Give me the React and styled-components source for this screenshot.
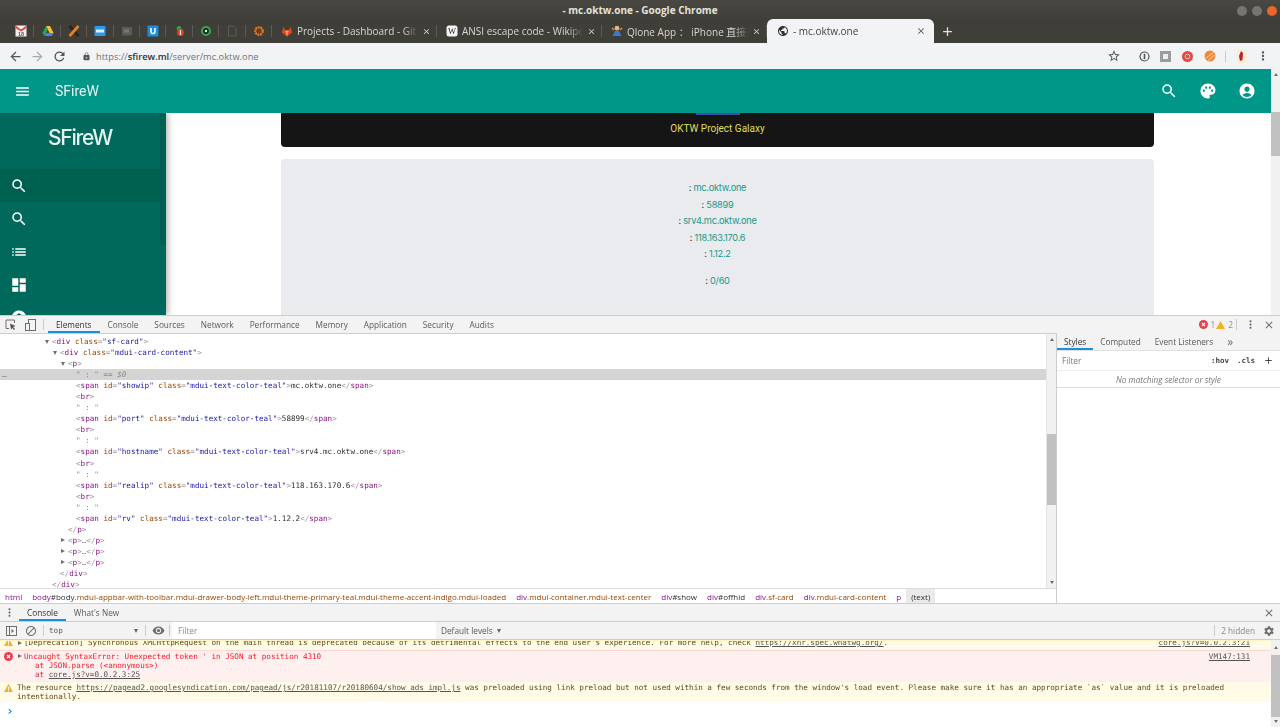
import styled, { createGlobalStyle } from 'styled-components'
import {
  MdAdd, MdArrowBack, MdArrowForward, MdClose, MdRefresh, MdLock, MdStarBorder, MdMoreVert,
  MdMenu, MdSearch, MdPalette, MdAccountCircle, MdList, MdDashboard, MdSettings,
  MdBlock, MdVisibility, MdPublic,
} from 'react-icons/md'

const GlobalStyle = createGlobalStyle`
  html, body {
    margin: 0;
    padding: 0;
    overflow: hidden;
    background: #fff;
  }
`

const UI = `'Open Sans', 'Noto Sans CJK SC', sans-serif`
const MONO = `'DejaVu Sans Mono', monospace`

const Win = styled.div`
  width: 1280px;
  height: 727px;
  display: flex;
  flex-direction: column;
  overflow: hidden;
  font-family: ${UI};
  filter: blur(0.35px);
`

const TitleBar = styled.div`
  height: 19px;
  flex: none;
  position: relative;
  display: flex;
  align-items: center;
  justify-content: center;
  background: linear-gradient(180deg, #4a4842 0%, #403e39 100%);
  color: #e4e2dc;
  font-size: 10px;
  font-weight: 700;
`

const WinButtons = styled.div`
  position: absolute;
  right: 3px;
  top: 6px;
  display: flex;
  gap: 5px;
`

const WinButton = styled.span`
  width: 10px;
  height: 10px;
  border-radius: 50%;
  background: ${(p) => p.$color};
`

const TabStrip = styled.div`
  height: 24px;
  flex: none;
  display: flex;
  align-items: stretch;
  padding-left: 8px;
  background: #403e39;
  color: #d8d7d3;
  font-size: 10px;
`

const PinnedTab = styled.div`
  width: 26.4px;
  flex: none;
  display: flex;
  align-items: center;
  justify-content: center;
  position: relative;
  &::after {
    content: '';
    position: absolute;
    right: 0;
    top: 6px;
    bottom: 6px;
    width: 1px;
    background: #5c5a55;
  }
`

const Tab = styled.div`
  width: ${(p) => p.$w}px;
  flex: none;
  display: flex;
  align-items: center;
  gap: 4px;
  padding: 0 6px 0 9px;
  box-sizing: border-box;
  position: relative;
  ${(p) => p.$active ? `
    background: #f2f3f5;
    color: #45433f;
    border-radius: 6px 6px 0 0;
    padding-left: 10px;
    padding-right: 8px;
  ` : `
    &::after {
      content: '';
      position: absolute;
      right: 0;
      top: 6px;
      bottom: 6px;
      width: 1px;
      background: #5c5a55;
    }
  `}
`

const TabLabel = styled.span`
  flex: 1;
  white-space: nowrap;
  overflow: hidden;
  ${(p) => !p.$active && `
    -webkit-mask-image: linear-gradient(90deg, #000 88%, transparent 100%);
    mask-image: linear-gradient(90deg, #000 88%, transparent 100%);
  `}
`

const NewTab = styled.div`
  width: 28px;
  display: flex;
  align-items: center;
  justify-content: center;
  color: #e4e3df;
  font-size: 15px;
`

const Toolbar = styled.div`
  height: 26px;
  flex: none;
  display: flex;
  align-items: center;
  padding: 0 7px 0 4px;
  background: #f2f3f5;
  color: #5c5e60;
`

const NavIcon = styled.span`
  display: flex;
  width: 22px;
  justify-content: center;
  font-size: 15px;
  color: ${(p) => p.$dim ? '#a9abad' : '#54565a'};
`

const Url = styled.div`
  display: flex;
  align-items: center;
  gap: 5px;
  margin-left: 12px;
  font-size: 9.3px;
  color: #70757a;
  svg { font-size: 9px; color: #54565a; }
  b { color: #303236; font-weight: 600; }
`

const ToolIcons = styled.div`
  margin-left: auto;
  display: flex;
  align-items: center;
`

const ExtSlot = styled.span`
  display: flex;
  justify-content: center;
  align-items: center;
  width: ${(p) => p.$w}px;
`

const Page = styled.div`
  height: 246px;
  flex: none;
  display: flex;
  overflow: hidden;
`

const Viewport = styled.div`
  flex: 1;
  min-width: 0;
  display: flex;
  flex-direction: column;
`

const AppBar = styled.div`
  height: 44px;
  flex: none;
  display: flex;
  align-items: center;
  padding: 0 15px 0 14px;
  background: #009688;
  color: #fff;
  position: relative;
  z-index: 2;
`

const AppBarIcon = styled.span`
  display: flex;
  font-size: ${(p) => p.$size || 17}px;
`

const AppTitle = styled.span`
  margin-left: 24px;
  font-family: Roboto, sans-serif;
  font-size: 14px;
  color: #e6f3f1;
`

const AppActions = styled.div`
  margin-left: auto;
  display: flex;
  align-items: center;
  gap: 21px;
`

const Body = styled.div`
  flex: 1;
  min-height: 0;
  display: flex;
`

const Drawer = styled.div`
  width: 166px;
  flex: none;
  background: #00695c;
  color: #fff;
  position: relative;
  overflow: hidden;
  box-shadow: 2px 0 6px rgba(0, 0, 0, 0.3);
  z-index: 1;
`

const DrawerBar = styled.div`
  position: absolute;
  right: 0;
  top: 0;
  width: 6px;
  height: 132px;
  background: #005f53;
`

const Logo = styled.div`
  height: 56px;
  padding-right: 6px;
  display: flex;
  align-items: flex-start;
  justify-content: center;
  font-family: Inter, sans-serif;
  font-size: 21px;
  font-weight: 500;
  letter-spacing: -1.2px;
  color: #e6f3f1;
  line-height: 50px;
`

const DrawerItem = styled.div`
  height: 33.2px;
  display: flex;
  align-items: center;
  padding-left: 10px;
  font-size: 18px;
  background: ${(p) => p.$active ? '#00604f' : 'transparent'};
`

const Main = styled.div`
  flex: 1;
  min-width: 0;
  background: #fff;
  display: flex;
  flex-direction: column;
  align-items: center;
  padding-right: 2px;
`

const BannerCard = styled.div`
  width: 873px;
  height: 34px;
  flex: none;
  background: #151515;
  border-radius: 0 0 4px 4px;
  display: flex;
  flex-direction: column;
  align-items: center;
  color: #e2de58;
  position: relative;
`

const BannerStrip = styled.div`
  width: 44px;
  height: 2px;
  background: #3f51a5;
`

const BannerText = styled.div`
  margin-top: 7px;
  line-height: 14px;
  font-family: Roboto, sans-serif;
  font-size: 10px;
`

const InfoCard = styled.div`
  width: 873px;
  height: 200px;
  flex: none;
  margin-top: 12px;
  padding-top: 21px;
  box-sizing: border-box;
  background: #e9ebee;
  border-radius: 4px;
  text-align: center;
  font-family: Inter, Roboto, sans-serif;
  font-size: 9.2px;
  letter-spacing: -0.25px;
  color: #333;
`

const InfoGroup = styled.p`
  margin: 0 0 10.5px;
  line-height: 16.5px;
`

const Teal = styled.span`
  color: #16998b;
`

const PageScroll = styled.div`
  width: 9px;
  flex: none;
  background: #f1f1f1;
  display: flex;
  flex-direction: column;
  align-items: center;
`

const ScrollArrow = styled.span`
  width: 0;
  height: 0;
  flex: none;
  border-left: 2.5px solid transparent;
  border-right: 2.5px solid transparent;
  ${(p) => p.$down ? 'border-top: 3px solid #6e6e6e;' : 'border-bottom: 3px solid #6e6e6e;'}
  margin: ${(p) => p.$margin};
`

const ScrollThumb = styled.span`
  width: 9px;
  height: ${(p) => p.$h}px;
  flex: none;
  background: #c1c1c1;
  margin-top: ${(p) => p.$top}px;
`

const Devtools = styled.div`
  flex: 1;
  min-height: 0;
  display: flex;
  flex-direction: column;
  background: #fff;
`

const PanelTabs = styled.div`
  height: ${(p) => p.$h}px;
  flex: none;
  box-sizing: border-box;
  display: flex;
  align-items: stretch;
  background: #f3f3f3;
  border-top: 1px solid #cdcdcd;
  border-bottom: 1px solid #cdcdcd;
  color: #5a5a5a;
  font-size: 8.25px;
`

const ToolBtn = styled.span`
  width: ${(p) => p.$w || 19}px;
  flex: none;
  display: flex;
  align-items: center;
  justify-content: center;
  color: #6e6e6e;
  font-size: ${(p) => p.$size || 12}px;
`

const BarSep = styled.span`
  width: 1px;
  flex: none;
  align-self: center;
  height: 11px;
  background: #ccc;
  margin: 0 ${(p) => p.$gap || 4}px;
`

const PanelTab = styled.span`
  display: flex;
  align-items: center;
  padding: 0 8px;
  color: ${(p) => p.$active ? '#333' : '#5a5a5a'};
  box-shadow: ${(p) => p.$active ? 'inset 0 -2px 0 #1a8fdd' : 'none'};
`

const SideTab = styled(PanelTab)`
  padding: 0 7px;
`

const MoreTabs = styled(SideTab)`
  font-size: 12px;
  color: #6e6e6e;
`

const Counter = styled.span`
  display: flex;
  align-items: center;
  gap: 3px;
  margin-right: 1px;
  font-size: 8.25px;
`

const Split = styled.div`
  height: 269px;
  flex: none;
  display: flex;
`

const ElementsPane = styled.div`
  flex: 1;
  min-width: 0;
  display: flex;
  flex-direction: column;
`

const TreeWrap = styled.div`
  flex: 1;
  min-height: 0;
  display: flex;
`

const Tree = styled.div`
  flex: 1;
  min-width: 0;
  padding-top: 2px;
  font-family: ${MONO};
  font-size: 7.6px;
  overflow: hidden;
`

const Row = styled.div`
  height: 11.05px;
  line-height: 11px;
  white-space: pre;
  position: relative;
  padding-left: ${(p) => p.$x}px;
  background: ${(p) => p.$selected ? '#d4d4d4' : 'transparent'};
`

const Caret = styled.span`
  position: absolute;
  top: 3.5px;
  margin-left: -7px;
  width: 0;
  height: 0;
  ${(p) => p.$open ? `
    border-left: 2.5px solid transparent;
    border-right: 2.5px solid transparent;
    border-top: 4px solid #6e6e6e;
  ` : `
    border-top: 2.5px solid transparent;
    border-bottom: 2.5px solid transparent;
    border-left: 4px solid #6e6e6e;
  `}
`

const RowDots = styled.span`
  position: absolute;
  left: 2px;
  color: #777;
`

const Bracket = styled.span`color: #a894a6;`
const TagName = styled.span`color: #881280;`
const AttrName = styled.span`color: #994500;`
const AttrVal = styled.span`color: #1a1aa6;`
const NodeText = styled.span`color: #303030;`
const Gray = styled.span`color: #8a8a8a;`
const GrayItalic = styled.span`color: #8a8a8a; font-style: italic;`

const VScroll = styled.div`
  width: 10px;
  flex: none;
  background: #f1f1f1;
  border-left: 1px solid #e4e4e4;
  box-sizing: border-box;
  display: flex;
  flex-direction: column;
  align-items: center;
`

const Crumbs = styled.div`
  height: 15px;
  flex: none;
  display: flex;
  align-items: stretch;
  border-top: 1px solid #dcdcdc;
  box-sizing: border-box;
  font-size: 8px;
  white-space: nowrap;
  color: #303030;
`

const Crumb = styled.span`
  display: flex;
  align-items: center;
  padding: 0 5px;
  background: ${(p) => p.$selected ? '#eaeaea' : 'transparent'};
`

const CrumbTag = styled.span`color: #881280;`
const CrumbClass = styled.span`color: #994500;`

const Sidebar = styled.div`
  width: 224px;
  flex: none;
  box-sizing: border-box;
  border-left: 1px solid #cdcdcd;
  display: flex;
  flex-direction: column;
  margin-top: -1px;
`

const SideTabs = styled.div`
  height: 18px;
  flex: none;
  display: flex;
  align-items: stretch;
  background: #f3f3f3;
  border-bottom: 1px solid #e0e0e0;
  font-size: 8.25px;
  color: #5a5a5a;
  box-sizing: border-box;
`

const FilterRow = styled.div`
  height: 19px;
  flex: none;
  display: flex;
  align-items: center;
  padding-left: 5px;
  color: #757575;
  font-size: 8.25px;
`

const FilterActions = styled.div`
  margin-left: auto;
  display: flex;
  align-items: center;
  gap: 8px;
  padding-right: 6px;
  font-family: ${MONO};
  font-size: 7.5px;
  font-weight: 700;
  color: #444;
`

const EmptyNote = styled.div`
  height: 18px;
  flex: none;
  box-sizing: border-box;
  display: flex;
  align-items: center;
  justify-content: center;
  border-top: 1px solid #eee;
  border-bottom: 1px solid #ddd;
  color: #777;
  font-size: 8.2px;
  font-style: italic;
`

const ConsoleBar = styled.div`
  height: 18px;
  flex: none;
  display: flex;
  align-items: center;
  background: #f3f3f3;
  border-bottom: 1px solid #cdcdcd;
  box-sizing: border-box;
  font-size: 8.25px;
  color: #5a5a5a;
`

const LevelFilter = styled.div`
  width: 264px;
  flex: none;
  align-self: stretch;
  display: flex;
  align-items: center;
  padding-left: 6px;
  box-sizing: border-box;
  background: #fff;
  color: #8a8a8a;
`

const TopSelect = styled.span`
  width: 95px;
  display: flex;
  align-items: center;
  justify-content: space-between;
  padding: 0 4px 0 2px;
  box-sizing: border-box;
  font-family: ${MONO};
  font-size: 7.6px;
`

const DownTri = styled.span`
  width: 0;
  height: 0;
  border-left: 2.5px solid transparent;
  border-right: 2.5px solid transparent;
  border-top: 4px solid #666;
`

const Levels = styled.span`
  display: flex;
  align-items: center;
  gap: 4px;
  margin-left: 5px;
`

const Hidden = styled.span`
  margin-left: auto;
  display: flex;
  align-items: center;
  color: #8a8a8a;
`

const HiddenCount = styled.span`
  margin-right: 3px;
`

const ConsoleBody = styled.div`
  flex: 1;
  min-height: 0;
  display: flex;
`

const Messages = styled.div`
  flex: 1;
  min-width: 0;
  overflow: hidden;
  font-family: ${MONO};
  font-size: 7.6px;
  line-height: 9px;
`

const Msg = styled.div`
  display: flex;
  box-sizing: border-box;
  height: ${(p) => p.$h}px;
  overflow: hidden;
  padding: ${(p) => p.$pad};
  background: ${(p) => p.$kind === 'error' ? '#fff0f0' : '#fffbe6'};
  color: ${(p) => p.$kind === 'error' ? '#f0202c' : '#5c4a22'};
  border-top: 1px solid ${(p) => p.$kind === 'error' ? '#ffd6d6' : '#fff5c2'};
  position: relative;
`

const MsgText = styled.div`
  flex: 1;
  min-width: 0;
  white-space: pre;
  margin-top: ${(p) => p.$shift || 0}px;
`

const StackLine = styled.div`
  padding-left: 11px;
`

const MsgIcon = styled.svg`
  position: absolute;
  left: 4px;
  top: ${(p) => p.$top}px;
`

const MsgCaret = styled.span`
  position: absolute;
  left: 18px;
  top: ${(p) => p.$top}px;
  width: 0;
  height: 0;
  border-top: 2.5px solid transparent;
  border-bottom: 2.5px solid transparent;
  border-left: 4px solid #6e6e6e;
`

const MsgLink = styled.span`
  color: #545454;
  text-decoration: underline;
`

const MsgSource = styled(MsgLink)`
  position: absolute;
  right: 21px;
  top: ${(p) => p.$top}px;
`

const Prompt = styled.div`
  padding: 2px 0 0 6px;
  color: #1a8fdd;
  font-size: 13px;
  line-height: 13px;
  font-weight: 700;
`

function Fav({ kind }) {
  const common = { width: 12, height: 12, viewBox: '0 0 12 12' }
  switch (kind) {
    case 'gmail':
      return (
        <svg {...common}>
          <rect x="0.5" y="0.5" width="11" height="11" fill="#f4f0ee" />
          <path d="M.5.5 6 4.500 11.500.5v2.500L6 6.500.5 3z" fill="#d9473c" />
          <text x="6" y="11.300" fontSize="5.500" fontFamily="Liberation Sans, sans-serif" fontWeight="700" textAnchor="middle" fill="#555">18</text>
        </svg>
      )
    case 'drive':
      return (
        <svg {...common}>
          <path d="M4 1h4l3.600 7H7.600z" fill="#f5c02f" />
          <path d="M4 1l2 3.600L2.400 11 .4 8z" fill="#2ba15a" />
          <path d="M2.400 11l2-3h7.200l-2 3z" fill="#4285f4" />
        </svg>
      )
    case 'x':
      return (
        <svg {...common}>
          <path d="M1.500 1 10.500 11" stroke="#2c2622" strokeWidth="2.800" />
          <path d="M10.500 1 1.500 11" stroke="#e8811f" strokeWidth="2.800" />
        </svg>
      )
    case 'blue':
      return (
        <svg {...common}>
          <rect x="0.5" y="1" width="11" height="10" rx="1" fill="#2d9be8" />
          <rect x="2" y="4.5" width="8" height="3" fill="#d8effd" />
        </svg>
      )
    case 'folder':
      return (
        <svg {...common}>
          <rect x="1" y="2" width="10" height="8.500" rx="1" fill="#5e5c58" />
          <rect x="3" y="4.500" width="5" height="3" fill="#78766f" />
        </svg>
      )
    case 'u':
      return (
        <svg {...common}>
          <rect x="0.500" y="0.500" width="11" height="11" rx="1" fill="#1f8ed8" />
          <path d="M4 3v3.600a2 2 0 0 0 4 0V3" stroke="#fff" strokeWidth="1.500" fill="none" />
        </svg>
      )
    case 'bug':
      return (
        <svg {...common}>
          <circle cx="5" cy="3.400" r="2.400" fill="#3e9b4a" />
          <circle cx="6.400" cy="7.400" r="3.600" fill="#d8382d" />
          <rect x="5.800" y="5" width="1.300" height="5" fill="#f5e6c8" />
        </svg>
      )
    case 'ring':
      return (
        <svg {...common}>
          <circle cx="6" cy="6" r="4" stroke="#2fa84f" strokeWidth="2.200" fill="#222" />
          <circle cx="6" cy="6" r="1.200" fill="#e9f5c8" />
        </svg>
      )
    case 'doc':
      return (
        <svg {...common}>
          <path d="M2.500 1h5l2.500 2.500V11h-7.500z" fill="none" stroke="#5f5d58" strokeWidth="1" />
        </svg>
      )
    case 'gear':
      return (
        <svg {...common}>
          <circle cx="6" cy="6" r="3.700" fill="none" stroke="#e8791f" strokeWidth="2.300" strokeDasharray="2 0.6" />
          <circle cx="6" cy="6" r="1.700" fill="#7a3d22" />
        </svg>
      )
    case 'gitlab':
      return (
        <svg {...common}>
          <path d="M6 11.500 .8 7.400 2.600 1.500l1.500 4h3.800l1.500-4 1.800 5.900z" fill="#e24329" />
          <path d="M6 11.500 4.100 5.500h3.800z" fill="#fc9f3a" />
        </svg>
      )
    case 'wiki':
      return (
        <svg {...common}>
          <rect x="0.500" y="0.500" width="11" height="11" rx="2.500" fill="#f4f4f4" />
          <text x="6" y="9" fontSize="8.500" fontFamily="Liberation Serif, serif" textAnchor="middle" fill="#222">W</text>
        </svg>
      )
    case 'qlone':
      return (
        <svg {...common}>
          <circle cx="6" cy="3.200" r="2.400" fill="#e9b487" />
          <path d="M1.500 11 4 6h4l2.500 5z" fill="#3d78c9" />
          <path d="M1 3l2 2M11 3 9 5" stroke="#d9a020" strokeWidth="1.200" />
        </svg>
      )
    default:
      return null
  }
}

const pinned = ['gmail', 'drive', 'x', 'blue', 'folder', 'u', 'bug', 'ring', 'doc', 'gear']

const WarnIcon = ({ top }) => (
  <MsgIcon $top={top} width="9" height="8" viewBox="0 0 9 8">
    <path d="M4.500 0 9 8H0z" fill="#f2b321" />
    <rect x="4" y="2.800" width="1" height="2.800" fill="#fff" />
    <rect x="4" y="6.200" width="1" height="1" fill="#fff" />
  </MsgIcon>
)

const ErrorIcon = ({ top }) => (
  <MsgIcon $top={top} width="9" height="9" viewBox="0 0 9 9">
    <circle cx="4.500" cy="4.500" r="4.500" fill="#e2404c" />
    <path d="M3 3l3 3M6 3 3 6" stroke="#fff" strokeWidth="1.100" />
  </MsgIcon>
)

function SpanRow({ id, text }) {
  return (
    <Row $x={76}>
      <Bracket>&lt;</Bracket><TagName>span</TagName> <AttrName>id</AttrName><Bracket>=</Bracket>
      <AttrVal>"{id}"</AttrVal> <AttrName>class</AttrName><Bracket>=</Bracket>
      <AttrVal>"mdui-text-color-teal"</AttrVal><Bracket>&gt;</Bracket><NodeText>{text}</NodeText>
      <Bracket>&lt;/</Bracket><TagName>span</TagName><Bracket>&gt;</Bracket>
    </Row>
  )
}

function BrRow() {
  return <Row $x={76}><Bracket>&lt;</Bracket><TagName>br</TagName><Bracket>&gt;</Bracket></Row>
}

function ColonRow() {
  return <Row $x={76}><Gray>" : "</Gray></Row>
}

function CollapsedP() {
  return (
    <Row $x={68}>
      <Caret />
      <Bracket>&lt;</Bracket><TagName>p</TagName><Bracket>&gt;</Bracket><Gray>…</Gray>
      <Bracket>&lt;/</Bracket><TagName>p</TagName><Bracket>&gt;</Bracket>
    </Row>
  )
}

const infoLines = ['mc.oktw.one', '58899', 'srv4.mc.oktw.one', '118.163.170.6', '1.12.2']

const spanRows = [
  ['showip', 'mc.oktw.one'],
  ['port', '58899'],
  ['hostname', 'srv4.mc.oktw.one'],
  ['realip', '118.163.170.6'],
  ['rv', '1.12.2'],
]

export default function App() {
  return (
    <>
      <GlobalStyle />
      <Win>
        <TitleBar>
          - mc.oktw.one - Google Chrome
          <WinButtons>
            <WinButton $color="#77756f" />
            <WinButton $color="#77756f" />
            <WinButton $color="#e8672c" />
          </WinButtons>
        </TitleBar>

        <TabStrip>
          {pinned.map((k) => (
            <PinnedTab key={k}><Fav kind={k} /></PinnedTab>
          ))}
          <Tab $w={165}>
            <Fav kind="gitlab" />
            <TabLabel>Projects - Dashboard - GitLab</TabLabel>
            <MdClose size={9} />
          </Tab>
          <Tab $w={165}>
            <Fav kind="wiki" />
            <TabLabel>ANSI escape code - Wikipedia</TabLabel>
            <MdClose size={9} />
          </Tab>
          <Tab $w={165}>
            <Fav kind="qlone" />
            <TabLabel>Qlone App ： iPhone 直接掃描</TabLabel>
            <MdClose size={9} />
          </Tab>
          <Tab $w={167} $active>
            <MdPublic size={12} color="#333" />
            <TabLabel $active>- mc.oktw.one</TabLabel>
            <MdClose size={10} color="#555" />
          </Tab>
          <NewTab><MdAdd /></NewTab>
        </TabStrip>

        <Toolbar>
          <NavIcon><MdArrowBack /></NavIcon>
          <NavIcon $dim><MdArrowForward /></NavIcon>
          <NavIcon><MdRefresh /></NavIcon>
          <Url>
            <MdLock />
            <span>https://<b>sfirew.ml</b>/server/mc.oktw.one</span>
          </Url>
          <ToolIcons>
            <ExtSlot $w={22}><MdStarBorder size={14} color="#55575a" /></ExtSlot>
            <ExtSlot $w={8} />
            <ExtSlot $w={22}>
              <svg width="11" height="11" viewBox="0 0 11 11">
                <circle cx="5.500" cy="5.500" r="4.500" fill="none" stroke="#555" strokeWidth="1.200" />
                <rect x="4.700" y="2.800" width="1.600" height="5.400" fill="#555" />
              </svg>
            </ExtSlot>
            <ExtSlot $w={21}>
              <svg width="11" height="11" viewBox="0 0 11 11">
                <rect width="11" height="11" fill="#9a9c9e" />
                <rect x="3" y="3" width="5" height="5" fill="#eee" />
              </svg>
            </ExtSlot>
            <ExtSlot $w={22}>
              <svg width="11" height="11" viewBox="0 0 11 11">
                <circle cx="5.500" cy="5.500" r="5.500" fill="#e04a44" />
                <circle cx="5.500" cy="5.500" r="2.300" fill="none" stroke="#f4c6c0" strokeWidth="1" />
              </svg>
            </ExtSlot>
            <ExtSlot $w={23}>
              <svg width="12" height="12" viewBox="0 0 12 12">
                <circle cx="6" cy="6" r="5.500" fill="#ee8a34" />
                <path d="M2 8 9.500 2.500M4 10.500 10.500 5" stroke="#f7d2ad" strokeWidth="1" />
              </svg>
            </ExtSlot>
            <BarSep $gap={4} />
            <ExtSlot $w={23}>
              <svg width="13" height="14" viewBox="0 0 13 14">
                <rect x="2" width="10" height="14" fill="#f5efd8" />
                <path d="M6 2 8 4 7.500 11 5 12 4 7z" fill="#b3282d" />
              </svg>
            </ExtSlot>
            <ExtSlot $w={20}><MdMoreVert size={14} color="#55575a" /></ExtSlot>
          </ToolIcons>
        </Toolbar>

        <Page>
          <Viewport>
            <AppBar>
              <AppBarIcon><MdMenu /></AppBarIcon>
              <AppTitle>SFireW</AppTitle>
              <AppActions>
                <AppBarIcon $size={18}><MdSearch /></AppBarIcon>
                <AppBarIcon $size={18}><MdPalette /></AppBarIcon>
                <AppBarIcon $size={18}><MdAccountCircle /></AppBarIcon>
              </AppActions>
            </AppBar>
            <Body>
              <Drawer>
                <DrawerBar />
                <Logo>SFireW</Logo>
                <DrawerItem $active><MdSearch /></DrawerItem>
                <DrawerItem><MdSearch /></DrawerItem>
                <DrawerItem><MdList /></DrawerItem>
                <DrawerItem><MdDashboard /></DrawerItem>
                <DrawerItem><MdAccountCircle /></DrawerItem>
              </Drawer>
              <Main>
                <BannerCard>
                  <BannerStrip />
                  <BannerText>OKTW Project Galaxy</BannerText>
                </BannerCard>
                <InfoCard>
                  <InfoGroup>
                    {infoLines.map((t) => (
                      <span key={t}>: <Teal>{t}</Teal><br /></span>
                    ))}
                  </InfoGroup>
                  <InfoGroup>: <Teal>0/60</Teal></InfoGroup>
                </InfoCard>
              </Main>
            </Body>
          </Viewport>
          <PageScroll>
            <ScrollArrow $margin="4px 0 0" />
            <ScrollThumb $top={36} $h={44} />
          </PageScroll>
        </Page>

        <Devtools>
          <PanelTabs $h={19}>
            <ToolBtn $w={21}>
              <svg width="11" height="11" viewBox="0 0 11 11">
                <path d="M4 9.500H1V1h8.500v3" fill="none" stroke="#6e6e6e" />
                <path d="M5 4.500 10.500 7 8.200 8 10 10 9 11 7.300 9 6 10.800z" fill="#555" />
              </svg>
            </ToolBtn>
            <ToolBtn $w={18}>
              <svg width="11" height="12" viewBox="0 0 11 12">
                <rect x="3.500" y="0.500" width="7" height="11" fill="none" stroke="#6e6e6e" />
                <rect x="0.500" y="4.500" width="4" height="7" fill="#f3f3f3" stroke="#6e6e6e" />
              </svg>
            </ToolBtn>
            <BarSep $gap={4} />
            <PanelTab $active>Elements</PanelTab>
            <PanelTab>Console</PanelTab>
            <PanelTab>Sources</PanelTab>
            <PanelTab>Network</PanelTab>
            <PanelTab>Performance</PanelTab>
            <PanelTab>Memory</PanelTab>
            <PanelTab>Application</PanelTab>
            <PanelTab>Security</PanelTab>
            <PanelTab>Audits</PanelTab>
            <Hidden>
              <Counter>
                <svg width="9" height="9" viewBox="0 0 9 9">
                  <circle cx="4.500" cy="4.500" r="4.500" fill="#e2404c" />
                  <path d="M3 3l3 3M6 3 3 6" stroke="#fff" strokeWidth="1.100" />
                </svg>
                1
              </Counter>
              <Counter>
                <svg width="9" height="8" viewBox="0 0 9 8"><path d="M4.500 0 9 8H0z" fill="#f2b321" /></svg>
                2
              </Counter>
              <BarSep $gap={2} />
              <ToolBtn $w={22} $size={13}><MdMoreVert /></ToolBtn>
              <ToolBtn $w={16} $size={12}><MdClose /></ToolBtn>
              <ToolBtn $w={3} />
            </Hidden>
          </PanelTabs>

          <Split>
            <ElementsPane>
              <TreeWrap>
                <Tree>
                  <Row $x={52}><Caret $open /><Bracket>&lt;</Bracket><TagName>div</TagName> <AttrName>class</AttrName><Bracket>=</Bracket><AttrVal>"sf-card"</AttrVal><Bracket>&gt;</Bracket></Row>
                  <Row $x={60}><Caret $open /><Bracket>&lt;</Bracket><TagName>div</TagName> <AttrName>class</AttrName><Bracket>=</Bracket><AttrVal>"mdui-card-content"</AttrVal><Bracket>&gt;</Bracket></Row>
                  <Row $x={68}><Caret $open /><Bracket>&lt;</Bracket><TagName>p</TagName><Bracket>&gt;</Bracket></Row>
                  <Row $x={76} $selected><RowDots>…</RowDots><Gray>" : "</Gray> <GrayItalic>== $0</GrayItalic></Row>
                  {spanRows.map(([id, text], i) => (
                    <div key={id}>
                      <SpanRow id={id} text={text} />
                      {i < spanRows.length - 1 && <BrRow />}
                      {i < spanRows.length - 1 && <ColonRow />}
                    </div>
                  ))}
                  <Row $x={68}><Bracket>&lt;/</Bracket><TagName>p</TagName><Bracket>&gt;</Bracket></Row>
                  <CollapsedP />
                  <CollapsedP />
                  <CollapsedP />
                  <Row $x={60}><Bracket>&lt;/</Bracket><TagName>div</TagName><Bracket>&gt;</Bracket></Row>
                  <Row $x={52}><Bracket>&lt;/</Bracket><TagName>div</TagName><Bracket>&gt;</Bracket></Row>
                </Tree>
                <VScroll>
                  <ScrollArrow $margin="4px 0 0" />
                  <ScrollThumb $top={93} $h={71} />
                  <ScrollArrow $down $margin="76px 0 0" />
                </VScroll>
              </TreeWrap>
              <Crumbs>
                <Crumb><CrumbTag>html</CrumbTag></Crumb>
                <Crumb><CrumbTag>body</CrumbTag>#body<CrumbClass>.mdui-appbar-with-toolbar.mdui-drawer-body-left.mdui-theme-primary-teal.mdui-theme-accent-indigo.mdui-loaded</CrumbClass></Crumb>
                <Crumb><CrumbTag>div</CrumbTag><CrumbClass>.mdui-container.mdui-text-center</CrumbClass></Crumb>
                <Crumb><CrumbTag>div</CrumbTag>#show</Crumb>
                <Crumb><CrumbTag>div</CrumbTag>#offhid</Crumb>
                <Crumb><CrumbTag>div</CrumbTag><CrumbClass>.sf-card</CrumbClass></Crumb>
                <Crumb><CrumbTag>div</CrumbTag><CrumbClass>.mdui-card-content</CrumbClass></Crumb>
                <Crumb><CrumbTag>p</CrumbTag></Crumb>
                <Crumb $selected>(text)</Crumb>
              </Crumbs>
            </ElementsPane>

            <Sidebar>
              <SideTabs>
                <SideTab $active>Styles</SideTab>
                <SideTab>Computed</SideTab>
                <SideTab>Event Listeners</SideTab>
                <MoreTabs>»</MoreTabs>
              </SideTabs>
              <FilterRow>
                Filter
                <FilterActions>
                  <span>:hov</span>
                  <span>.cls</span>
                  <MdAdd size={11} />
                </FilterActions>
              </FilterRow>
              <EmptyNote>No matching selector or style</EmptyNote>
            </Sidebar>
          </Split>

          <PanelTabs $h={19}>
            <ToolBtn $w={19} $size={13}><MdMoreVert /></ToolBtn>
            <PanelTab $active>Console</PanelTab>
            <PanelTab>What's New</PanelTab>
            <Hidden>
              <ToolBtn $w={16} $size={12}><MdClose /></ToolBtn>
              <ToolBtn $w={3} />
            </Hidden>
          </PanelTabs>

          <ConsoleBar>
            <ToolBtn $w={22}>
              <svg width="11" height="10" viewBox="0 0 11 10">
                <rect x="0.500" y="0.500" width="10" height="9" fill="none" stroke="#6e6e6e" />
                <path d="M3.500 1v8" stroke="#6e6e6e" />
                <path d="M5.500 3 8 5 5.500 7z" fill="#6e6e6e" />
              </svg>
            </ToolBtn>
            <ToolBtn $w={18} $size={12}><MdBlock /></ToolBtn>
            <BarSep $gap={3} />
            <TopSelect>top <DownTri /></TopSelect>
            <BarSep $gap={3} />
            <ToolBtn $w={18} $size={13}><MdVisibility /></ToolBtn>
            <BarSep $gap={2} />
            <LevelFilter>Filter</LevelFilter>
            <Levels>Default levels <DownTri /></Levels>
            <Hidden>
              <BarSep $gap={6} />
              <HiddenCount>2 hidden</HiddenCount>
              <ToolBtn $w={22} $size={12}><MdSettings /></ToolBtn>
            </Hidden>
          </ConsoleBar>

          <ConsoleBody>
            <Messages>
              <Msg $kind="warn" $h={10} $pad="0 0 0 24px">
                <WarnIcon top={-3} />
                <MsgCaret $top={0} />
                <MsgText $shift={-3}>{'[Deprecation] Synchronous XMLHttpRequest on the main thread is deprecated because of its detrimental effects to the end user\'s experience. For more help, check '}<MsgLink>https://xhr.spec.whatwg.org/</MsgLink>.</MsgText>
                <MsgSource $top={-3}>core.js?v=0.0.2.3:21</MsgSource>
              </Msg>
              <Msg $kind="error" $h={31} $pad="1px 0 0 24px">
                <ErrorIcon top={1} />
                <MsgCaret $top={3} />
                <MsgText>
                  <div>Uncaught SyntaxError: Unexpected token ' in JSON at position 4310</div>
                  <StackLine>{'at JSON.parse (<anonymous>)'}</StackLine>
                  <StackLine>at <MsgLink>core.js?v=0.0.2.3:25</MsgLink></StackLine>
                </MsgText>
                <MsgSource $top={1}>VM147:131</MsgSource>
              </Msg>
              <Msg $kind="warn" $h={21} $pad="1px 0 0 17px">
                <WarnIcon top={2} />
                <MsgText>
                  <div>
                    {'The resource '}<MsgLink>https://pagead2.googlesyndication.com/pagead/js/r20181107/r20180604/show_ads_impl.js</MsgLink>
                    {" was preloaded using link preload but not used within a few seconds from the window's load event. Please make sure it has an appropriate `as` value and it is preloaded"}
                  </div>
                  <div>intentionally.</div>
                </MsgText>
              </Msg>
              <Prompt>›</Prompt>
            </Messages>
            <PageScroll>
              <ScrollArrow $margin="6px 0 0" />
              <ScrollThumb $top={6} $h={62} />
              <ScrollArrow $down $margin="3px 0 0" />
            </PageScroll>
          </ConsoleBody>
        </Devtools>
      </Win>
    </>
  )
}
